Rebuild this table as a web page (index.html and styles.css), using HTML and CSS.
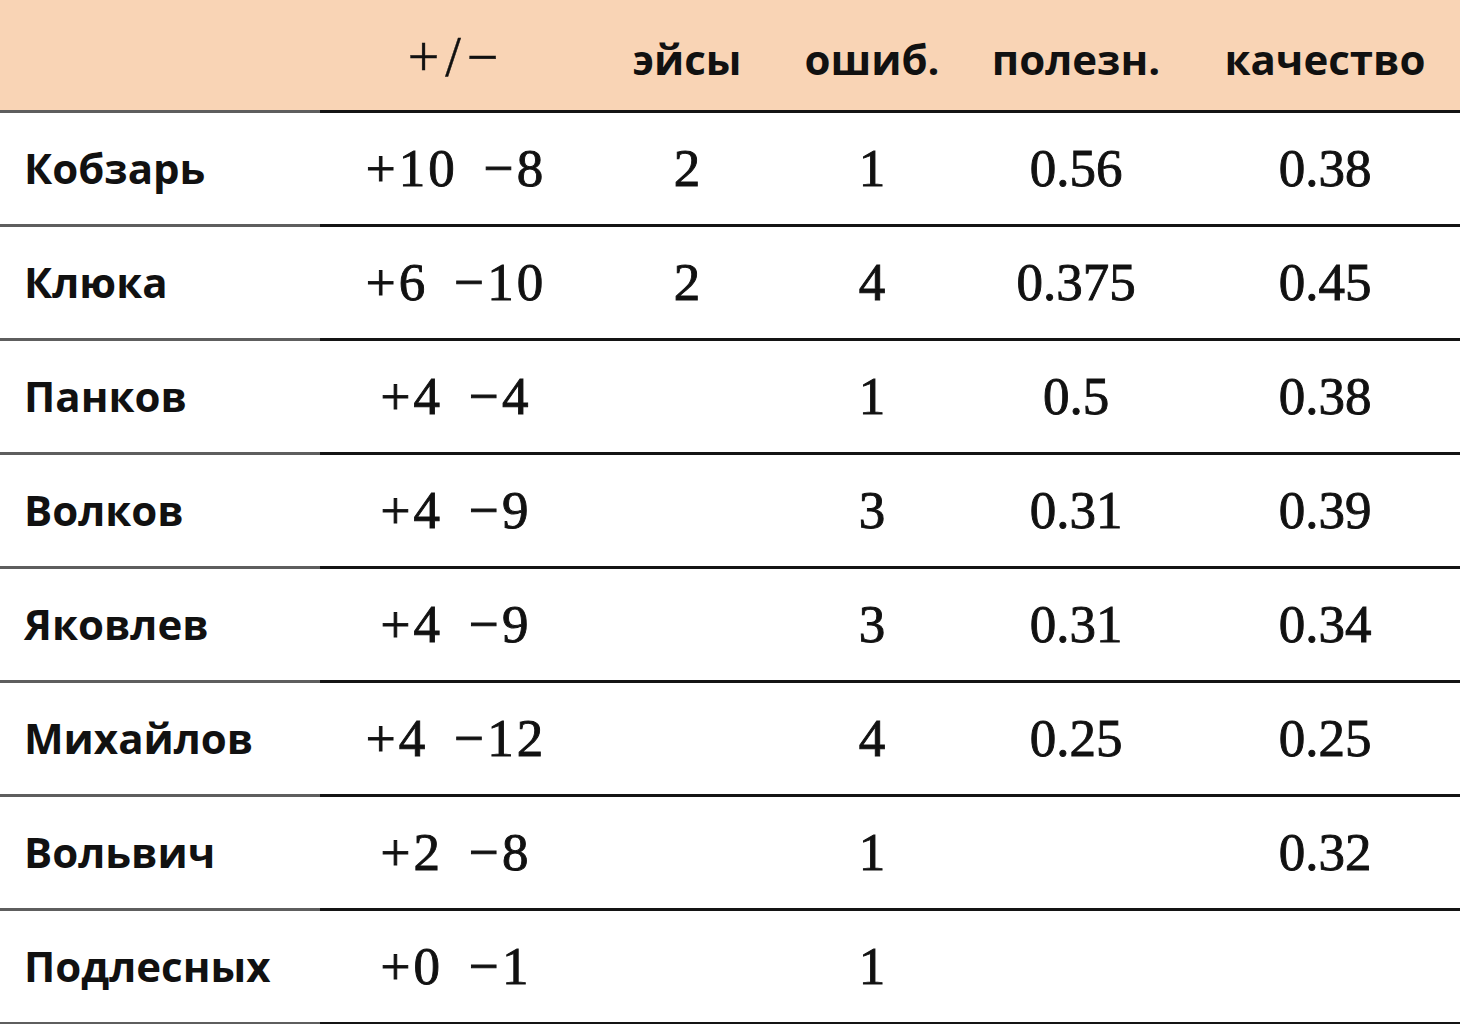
FILE: index.html
```html
<!DOCTYPE html>
<html lang="ru">
<head>
<meta charset="utf-8">
<title>Статистика</title>
<link rel="stylesheet" href="styles.css">
</head>
<body>
<div class="stats">
  <div class="row head">
    <div class="cell name"></div>
    <div class="cell num pmh">+/−</div>
    <div class="cell ttl">эйсы</div>
    <div class="cell ttl">ошиб.</div>
    <div class="cell ttl">полезн.</div>
    <div class="cell ttl">качество</div>
  </div>
  <div class="row">
    <div class="cell name">Кобзарь</div>
    <div class="cell num"><span class="pm"><span>+10</span><span>−8</span></span></div>
    <div class="cell num">2</div>
    <div class="cell num">1</div>
    <div class="cell num">0.56</div>
    <div class="cell num">0.38</div>
  </div>
  <div class="row">
    <div class="cell name">Клюка</div>
    <div class="cell num"><span class="pm"><span>+6</span><span>−10</span></span></div>
    <div class="cell num">2</div>
    <div class="cell num">4</div>
    <div class="cell num">0.375</div>
    <div class="cell num">0.45</div>
  </div>
  <div class="row">
    <div class="cell name">Панков</div>
    <div class="cell num"><span class="pm"><span>+4</span><span>−4</span></span></div>
    <div class="cell num"></div>
    <div class="cell num">1</div>
    <div class="cell num">0.5</div>
    <div class="cell num">0.38</div>
  </div>
  <div class="row">
    <div class="cell name">Волков</div>
    <div class="cell num"><span class="pm"><span>+4</span><span>−9</span></span></div>
    <div class="cell num"></div>
    <div class="cell num">3</div>
    <div class="cell num">0.31</div>
    <div class="cell num">0.39</div>
  </div>
  <div class="row">
    <div class="cell name">Яковлев</div>
    <div class="cell num"><span class="pm"><span>+4</span><span>−9</span></span></div>
    <div class="cell num"></div>
    <div class="cell num">3</div>
    <div class="cell num">0.31</div>
    <div class="cell num">0.34</div>
  </div>
  <div class="row">
    <div class="cell name">Михайлов</div>
    <div class="cell num"><span class="pm"><span>+4</span><span>−12</span></span></div>
    <div class="cell num"></div>
    <div class="cell num">4</div>
    <div class="cell num">0.25</div>
    <div class="cell num">0.25</div>
  </div>
  <div class="row">
    <div class="cell name">Вольвич</div>
    <div class="cell num"><span class="pm"><span>+2</span><span>−8</span></span></div>
    <div class="cell num"></div>
    <div class="cell num">1</div>
    <div class="cell num"></div>
    <div class="cell num">0.32</div>
  </div>
  <div class="row">
    <div class="cell name">Подлесных</div>
    <div class="cell num"><span class="pm"><span>+0</span><span>−1</span></span></div>
    <div class="cell num"></div>
    <div class="cell num">1</div>
    <div class="cell num"></div>
    <div class="cell num"></div>
  </div>
</div>
</body>
</html>
```
FILE: styles.css
```css
html, body {
  margin: 0;
  padding: 0;
  background: #ffffff;
}

.stats {
  width: 1460px;
  color: #111111;
}

.row {
  display: grid;
  grid-template-columns: 320px 272px 190px 180px 228px 1fr;
  height: 114px;
}

.row.head {
  height: 113px;
  background: #f9d4b5;
}

.cell {
  box-sizing: border-box;
  display: flex;
  align-items: center;
  justify-content: center;
  border-bottom: 3px solid #141414;
}

.cell.name {
  justify-content: flex-start;
  padding-left: 24px;
  border-bottom-color: #5e5e5e;
  font-family: "Open Sans", "Noto Sans", sans-serif;
  font-weight: 700;
  font-size: 42px;
  padding-bottom: 2px;
}

.cell.num {
  font-family: "Liberation Serif", "Times New Roman", serif;
  font-size: 53px;
  padding-bottom: 2px;
  -webkit-text-stroke: 0.9px #111111;
}

.head .cell {
  padding-top: 6px;
}

.cell.pmh {
  letter-spacing: 6px;
  font-size: 56px;
  -webkit-text-stroke: 0.4px #111111;
}

.cell.ttl {
  font-family: "Open Sans", "Noto Sans", sans-serif;
  font-weight: 700;
  font-size: 42px;
}

.pm {
  display: flex;
  gap: 26px;
  letter-spacing: 3px;
}
```
